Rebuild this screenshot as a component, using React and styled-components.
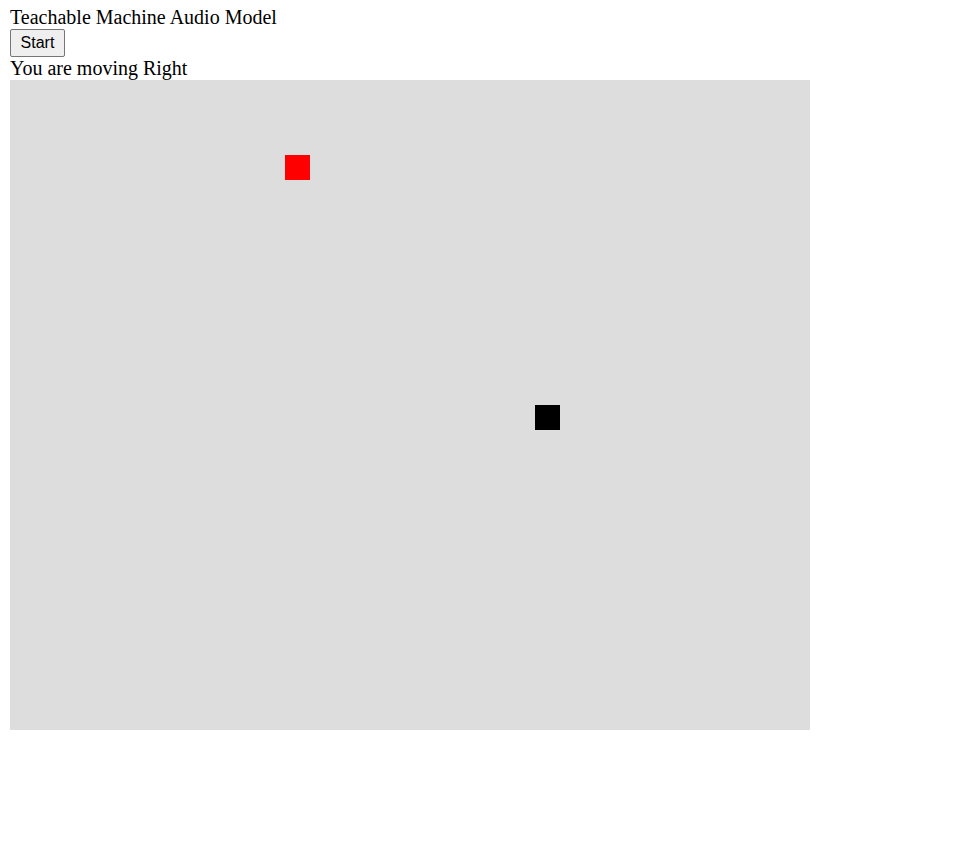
import React from "react";
import styled, { createGlobalStyle } from "styled-components";

const GlobalStyle = createGlobalStyle`
  body {
    margin: 0;
    background: #ffffff;
    font-family: "Liberation Serif", "Times New Roman", serif;
  }
`;

const Page = styled.div`
  padding: 6px 10px;
  font-size: 20px;
  line-height: 23px;
  color: #000000;
`;

const Title = styled.div``;

const StartButton = styled.button`
  display: block;
  width: 55px;
  height: 28px;
  padding: 0;
  font-family: "Liberation Sans", Arial, sans-serif;
  font-size: 16px;
  color: #000000;
  background: #efefef;
  border: 1px solid #767676;
  border-radius: 2px;
`;

const Status = styled.div``;

const Board = styled.div`
  position: relative;
  width: 800px;
  height: 650px;
  background: #dddddd;
`;

const Cell = styled.div`
  position: absolute;
  width: 25px;
  height: 25px;
  background: ${(p) => p.color};
`;

const cells = [
  { x: 275, y: 75, color: "#ff0000" },
  { x: 525, y: 325, color: "#000000" },
];

export default function App() {
  return (
    <>
      <GlobalStyle />
      <Page>
        <Title>Teachable Machine Audio Model</Title>
        <StartButton>Start</StartButton>
        <Status>You are moving Right</Status>
        <Board>
          {cells.map((c, i) => (
            <Cell key={i} color={c.color} style={{ left: c.x, top: c.y }} />
          ))}
        </Board>
      </Page>
    </>
  );
}
